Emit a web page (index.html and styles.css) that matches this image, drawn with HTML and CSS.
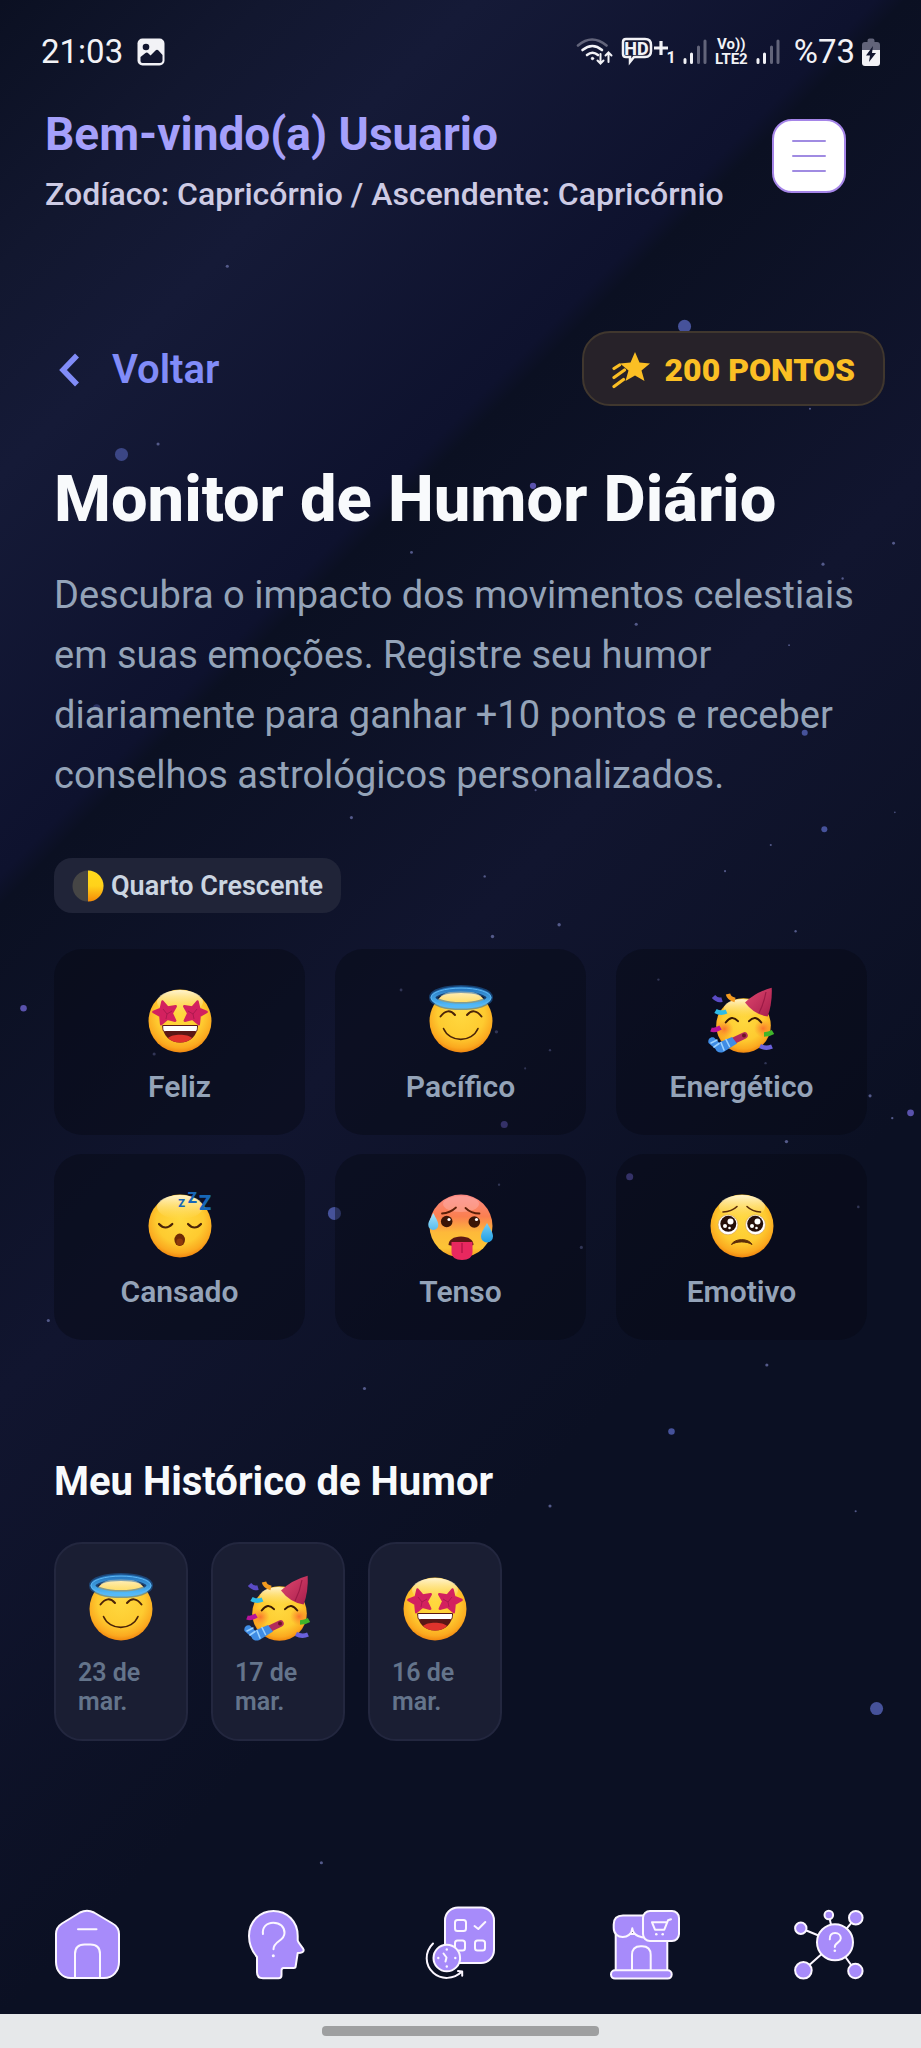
FILE: index.html
```html
<!DOCTYPE html>
<html lang="pt-BR">
<head>
<meta charset="utf-8">
<meta name="viewport" content="width=device-width, initial-scale=1">
<title>Monitor de Humor Diário</title>
<link rel="stylesheet" href="styles.css">
</head>
<body>
<svg class="defs" width="0" height="0" aria-hidden="true">
  <defs>
    <radialGradient id="skin" cx="50%" cy="40%" r="62%">
      <stop offset="0" stop-color="#ffd83f"/><stop offset=".6" stop-color="#fecb30"/><stop offset=".85" stop-color="#fba91f"/><stop offset="1" stop-color="#ee7d0c"/>
    </radialGradient>
    <linearGradient id="shine" x1="0" y1="0" x2="0" y2="1">
      <stop offset="0" stop-color="#fff6d8" stop-opacity=".95"/><stop offset="1" stop-color="#ffe680" stop-opacity="0"/>
    </linearGradient>
    <linearGradient id="heat" x1="0" y1="0" x2="0" y2="1">
      <stop offset="0" stop-color="#fb8a84"/><stop offset=".35" stop-color="#fb7f50"/><stop offset=".6" stop-color="#fdb93a"/><stop offset=".85" stop-color="#fdc535"/><stop offset="1" stop-color="#f39a1c"/>
    </linearGradient>
    <linearGradient id="drop" x1="0" y1="0" x2="0" y2="1">
      <stop offset="0" stop-color="#a6e4fb"/><stop offset="1" stop-color="#1f9fe4"/>
    </linearGradient>
    <linearGradient id="hat" x1="0" y1="0" x2="1" y2="1">
      <stop offset="0" stop-color="#e0486f"/><stop offset="1" stop-color="#a81d4c"/>
    </linearGradient>
    <radialGradient id="blush"><stop offset="0" stop-color="#f9622b" stop-opacity=".8"/><stop offset="1" stop-color="#f9822b" stop-opacity="0"/></radialGradient>
    <linearGradient id="halo" x1="0" y1="0" x2="0" y2="1">
      <stop offset="0" stop-color="#2878c0"/><stop offset="1" stop-color="#53bdfb"/>
    </linearGradient>
    <linearGradient id="moonlit" x1="0" y1="0" x2="0" y2="1"><stop offset="0" stop-color="#ffd91c"/><stop offset=".5" stop-color="#ffd21a"/><stop offset="1" stop-color="#f58a07"/></linearGradient>

    <symbol id="e-base" viewBox="0 0 72 72">
      <circle cx="36" cy="38" r="31.5" fill="url(#skin)"/>
      <ellipse cx="36" cy="19" rx="23" ry="12" fill="url(#shine)"/>
    </symbol>
    <symbol id="e-stars" viewBox="0 0 72 72">
      <use href="#e-base"/>
      <g fill="#d3215f" stroke="#d3215f" stroke-width="2.5" stroke-linejoin="round">
        <path d="M18.500 18.500l5.200 6 8-1.200-4 7 3.500 7.400-7.800-1.800-6.200 5.200-.8-8.200-7-4 7.400-3z"/>
        <path d="M53.500 18.500l-5.200 6-8-1.200 4 7-3.500 7.400 7.800-1.800 6.200 5.200.8-8.200 7-4-7.400-3z"/>
      </g>
      <path d="M19 26l4 5 5-3M23 31l-1 5M53 26l-4 5-5-3M49 31l1 5" fill="none" stroke="#ad194f" stroke-width="1"/>
      <path d="M18.700 42.500h34.800c0 10-7 17-17.400 17s-17.400-7-17.400-17z" fill="#5b1715"/>
      <path d="M24 55c4-4.500 20-4.500 24 0-6 6-18 6-24 0z" fill="#e0332c"/>
      <path d="M18.700 42.500h34.800c0 5-.5 6-2.500 6H21.200c-2 0-2.500-1-2.500-6z" fill="#fff" stroke="#5b1715" stroke-width="1"/>
    </symbol>
    <symbol id="e-angel" viewBox="0 0 72 72">
      <use href="#e-base"/>
      <ellipse cx="36" cy="14.600" rx="28" ry="8.500" fill="none" stroke="#1f66ad" stroke-opacity=".55" stroke-width="8"/>
      <ellipse cx="36" cy="14.600" rx="28" ry="8.500" fill="none" stroke="url(#halo)" stroke-width="5"/>
      <ellipse cx="36" cy="14.600" rx="30" ry="9.500" fill="none" stroke="#5db6f3" stroke-width="1"/>
      <g fill="none" stroke="#4a2308" stroke-width="1.600" stroke-linecap="round">
        <path d="M15.500 33.500q7.500-9.500 14.500-1.500M42 32q7-8 14.500 1.500" stroke-width="2"/>
        <path d="M18.500 45.500c6 14.500 28.500 14.500 34.500 0"/>
      </g>
    </symbol>
    <symbol id="e-party" viewBox="0 0 72 72">
      <circle cx="37.500" cy="42.500" r="27.300" fill="url(#skin)"/>
      <ellipse cx="36" cy="25" rx="18" ry="9" fill="url(#shine)"/>
      <circle cx="18.500" cy="46" r="9" fill="url(#blush)"/><circle cx="57" cy="45.500" r="9" fill="url(#blush)"/>
      <path d="M65.700 4.800Q66.500 20 61.700 33.500 48 31.500 39 19.500 50 9 65.700 4.800z" fill="url(#hat)"/>
      <path d="M60 9Q58 20 53 30" fill="none" stroke="#9c1a46" stroke-width="1.200"/>
      <path d="M19.700 39.500q6-8.500 12.300-1.300M43 38.200q6.300-7.200 12.300 1.300" fill="none" stroke="#3a1a05" stroke-width="2" stroke-linecap="round"/>
      <path d="M38.500 52.500L27 58" stroke="#b32c5c" stroke-width="6.500" stroke-linecap="round"/>
      <path d="M26 54l5 6.500-13.500 8.500c-4 1.500-7 0-8-3L2.500 60c-1-4 2-6.500 5.500-5.500l5 5z" fill="#3f8ce4"/>
      <path d="M5 60l6-3M8 64l5-3.500M20 56.500l3.500 7M15 59.500l3 7.500" stroke="#9bd2ff" stroke-width="1.600" stroke-linecap="round"/>
      <circle cx="38" cy="52.500" r="2" fill="#6b1424"/>
      <g stroke-width="4.500" fill="none">
        <path d="M7.500 13.500q4 4.500 8.500 3" stroke="#5a4bc4"/><path d="M22 11q1 4.500 7 6" stroke="#f39a1f"/>
        <path d="M9.500 28q5 3 11 .5" stroke="#2fbbe6"/><path d="M5 46.500q4 1.500 9.500-2" stroke="#b8129a"/>
        <path d="M58 51.500q5 0 9-2.500" stroke="#3fb52a"/><path d="M54 63q6 3 12 .5" stroke="#6a61dc"/>
      </g>
    </symbol>
    <symbol id="e-sleep" viewBox="0 0 72 72">
      <use href="#e-base"/>
      <path d="M15 36q6.500 7 13.300 0M44 36q6.500 7 13 0" fill="none" stroke="#4a2308" stroke-width="2.200" stroke-linecap="round"/>
      <ellipse cx="35.700" cy="51.800" rx="5.300" ry="6.200" fill="#6e2a06"/>
      <ellipse cx="35.700" cy="54" rx="3.300" ry="3.500" fill="#8f3a0a"/>
      <g class="zzz" text-anchor="middle"><text x="37.700" y="18.500" font-size="11">Z</text><text x="48.300" y="15" font-size="15">Z</text><text x="61" y="21.500" font-size="20">Z</text></g>
    </symbol>
    <symbol id="e-hot" viewBox="0 0 72 72">
      <circle cx="36" cy="38" r="31.500" fill="url(#heat)"/>
      <ellipse cx="36" cy="16" rx="18" ry="8" fill="#ffc3c3" opacity=".35"/>
      <circle cx="21.700" cy="33.500" r="5.800" fill="#3b1506"/><circle cx="49.300" cy="34" r="5.800" fill="#3b1506"/>
      <circle cx="24" cy="31.500" r="1.600" fill="#fff"/><circle cx="51.500" cy="31.500" r="1.600" fill="#fff"/>
      <path d="M17 25.500q8-.5 14-6M40.500 20q5.500 5.500 14 5.500" fill="none" stroke="#5c1f08" stroke-width="1.800" stroke-linecap="round"/>
      <path d="M23.500 57c0-5 5-8.500 12.500-8.500S48.500 52 48.500 57q-6 2-12.500 2t-12.500-2z" fill="#5b1715"/>
      <path d="M26.500 54h21v10c0 5-4 8-10.500 8s-10.500-3-10.500-8z" fill="#e8285f"/>
      <path d="M37 55v10" stroke="#b81649" stroke-width="1.500"/>
      <path d="M8.300 25c3 6 5 8.500 5 12a5 5 0 0 1-10 0c0-3.500 2-6 5-12zM62 35c4 7 6 10 6 13.500a6 6 0 0 1-12 0c0-3.500 2-6.500 6-13.500z" fill="url(#drop)"/>
    </symbol>
    <symbol id="e-plead" viewBox="0 0 72 72">
      <use href="#e-base"/>
      <circle cx="22" cy="36.800" r="10" fill="#fff" stroke="#d9a85c" stroke-width=".7"/><circle cx="49.500" cy="36.800" r="10" fill="#fff" stroke="#d9a85c" stroke-width=".7"/>
      <circle cx="22.300" cy="35.800" r="8" fill="#26100a"/><circle cx="49.200" cy="35.800" r="8" fill="#26100a"/>
      <g fill="#fff"><circle cx="24.500" cy="33.500" r="3"/><circle cx="51.500" cy="33.500" r="3"/><circle cx="19" cy="38" r="2"/><circle cx="46" cy="38" r="2"/><circle cx="23.500" cy="40" r="1.300"/><circle cx="50.500" cy="40" r="1.300"/></g>
      <path d="M17 24q9-.5 14-5.500M41 18.500q5 5 13.500 5.500" fill="none" stroke="#5c2c08" stroke-width="1.600" stroke-linecap="round"/>
      <path d="M25.500 56.500c3-6.500 17.500-6.500 20.500 0-5-3.500-15.500-3.500-20.500 0z" fill="#5c2c08" stroke="#5c2c08" stroke-linejoin="round"/>
    </symbol>
    <symbol id="s-bars" viewBox="0 0 26 28">
      <g stroke-width="3" stroke-linecap="round"><path d="M3 21.500v3M9.500 16v8.500" stroke="#f2f2f6"/><path d="M16.500 9v15.500M23 3v21.500" stroke="#62647a"/></g>
    </symbol>
  </defs>
</svg>

<svg class="stars" viewBox="0 0 705 1568" preserveAspectRatio="xMidYMid slice" aria-hidden="true">
  <g fill="#46529a">
    <circle cx="524" cy="250" r="5"/><circle cx="93" cy="348" r="5" opacity=".8"/><circle cx="671" cy="1308" r="5"/><circle cx="256" cy="929" r="5"/>
    <circle cx="514" cy="1096" r="2.500"/><circle cx="631" cy="635" r="2.300"/><circle cx="616" cy="561" r="2.300"/><circle cx="74" cy="542" r="2.800" opacity=".5"/>
  </g>
  <g fill="#5a52ac">
    <circle cx="408" cy="372" r="2.400"/><circle cx="18" cy="772" r="2.500"/><circle cx="697" cy="852" r="2.600"/><circle cx="386" cy="861" r="2.700"/><circle cx="482" cy="901" r="2.700"/><circle cx="227" cy="1187" r="2.600"/>
  </g>
  <g fill="#545a8a">
    <circle cx="174" cy="204" r="1.200"/><circle cx="121" cy="340" r="1.200"/><circle cx="620" cy="313" r=".8"/><circle cx="315" cy="423" r="1.100"/><circle cx="684" cy="416" r="1.100"/>
    <circle cx="630" cy="432" r="1.200"/><circle cx="645" cy="443" r=".9"/><circle cx="487" cy="478" r="1.200"/><circle cx="604" cy="494" r=".7"/><circle cx="451" cy="503" r=".8"/>
    <circle cx="410" cy="605" r=".8"/><circle cx="269" cy="626" r="1.200"/><circle cx="685" cy="622" r=".6"/><circle cx="590" cy="647" r=".8"/><circle cx="555" cy="667" r=".8"/>
    <circle cx="371" cy="671" r=".9"/><circle cx="428" cy="708" r="1.300"/><circle cx="377" cy="717" r="1.300"/><circle cx="609" cy="713" r=".9"/><circle cx="307" cy="758" r="1.100"/>
    <circle cx="504" cy="750" r=".9"/><circle cx="118" cy="807" r="1.200"/><circle cx="380" cy="790" r="1.300"/><circle cx="421" cy="804" r=".9"/><circle cx="402" cy="818" r=".8"/>
    <circle cx="586" cy="814" r=".9"/><circle cx="666" cy="839" r="1.200"/><circle cx="683" cy="856" r=".9"/><circle cx="602" cy="874" r="1.300"/><circle cx="382" cy="907" r=".9"/>
    <circle cx="657" cy="924" r="1"/><circle cx="445" cy="955" r="1.200"/><circle cx="37" cy="1011" r="1.200"/><circle cx="587" cy="1045" r="1.200"/><circle cx="279" cy="1063" r="1.200"/>
    <circle cx="421" cy="1153" r="1.200"/><circle cx="655" cy="1157" r=".8"/><circle cx="246" cy="1426" r="1.200"/>
  </g>
</svg>

<div class="app">
  <div class="status">
    <span class="status-text">21:03</span>
    <svg class="photo" width="28" height="28" viewBox="0 0 28 28"><rect x=".5" y=".5" width="27" height="27" rx="5" fill="#f2f2f6"/><circle cx="9" cy="9" r="3.300" fill="#11152e"/><path d="M3.500 23v-4l5-4q1.500-1 3 .5l2 2 5-5q1.500-1.500 3 0l4 4.500v6q-.5 2-2.500 2H5.500q-2 0-2-2z" fill="#11152e"/></svg>
    <div class="status-right">
      <svg width="38" height="30" viewBox="0 0 38 30" fill="none" stroke="#f2f2f6" stroke-width="2.600" stroke-linecap="round"><path d="M2 8.500q14-12 28.500 0" stroke="#62647a"/><path d="M6.500 13q10-8 19.500 0M11 18q5.500-4.500 11 0"/><circle cx="16.500" cy="21.500" r="1.200" fill="#f2f2f6" stroke-width="1"/><g stroke-width="2"><path d="M24.500 17v9M21.500 23.500l3 3 3-3M32.500 25v-9M29.500 18.500l3-3 3 3"/></g></svg>
      <svg width="54" height="30" viewBox="0 0 54 30"><path d="M5 2h19q6 0 6 6v6q0 6-6 6H13l-4 5v-5H5q-3 0-3-3V5q0-3 3-3z" fill="none" stroke="#f2f2f6" stroke-width="2.500"/><text x="15.500" y="17.500" class="hd" text-anchor="middle">HD</text><path d="M40 4v14M33 11h14" stroke="#f2f2f6" stroke-width="3.200"/><text x="50" y="26" class="hd-sub" text-anchor="middle">1</text></svg>
      <svg width="26" height="28"><use href="#s-bars"/></svg>
      <span class="volte">Vo))<br>LTE2</span>
      <svg width="26" height="28"><use href="#s-bars"/></svg>
      <span class="status-text">%73</span>
      <svg class="battery" width="18" height="28" viewBox="0 0 18 28"><path d="M5.500 2.500q0-2 2-2h3q2 0 2 2V4H15q3 0 3 3v5H0V7q0-3 3-3h2.500z" fill="#62647a"/><path d="M0 12h18v13q0 3-3 3H3q-3 0-3-3z" fill="#f2f2f6"/><path d="M11 8L4 17.500h4L7 24l7-9h-4z" fill="#11152e"/></svg>
    </div>
  </div>

  <header class="header">
    <div class="greeting">
      <p class="hello">Bem-vindo(a) Usuario</p>
      <p class="sign">Zodíaco: Capricórnio / Ascendente: Capricórnio</p>
    </div>
    <button class="menu" type="button" aria-label="Menu"><svg width="36" height="36" viewBox="0 0 36 36" stroke="#a08be2" stroke-width="2" stroke-linecap="round"><path d="M2 3h32M2 18h32M2 33h32"/></svg></button>
  </header>

  <main class="main">
    <div class="topbar">
      <a class="back" href="#"><svg width="22" height="34" viewBox="0 0 22 34" fill="none" stroke="#818cf8" stroke-width="5.500"><path d="M19 2.500L5 17l14 14.500"/></svg>Voltar</a>
      <div class="points"><svg width="38" height="38" viewBox="0 0 38 38"><path d="M23 1l4.500 10.500L38 12.500l-8.500 7L32.500 30 23 24.500 13.500 30l3-10.500L8 12.500l10.500-1z" fill="#fbbf24"/><g stroke="#fbbf24" stroke-width="3.200" stroke-linecap="round"><path d="M2 17.500l5.500-3.500M2 26.500l10.500-7.500M2 35.500l9.500-7"/></g></svg>200 PONTOS</div>
    </div>

    <h1 class="title">Monitor de Humor Diário</h1>
    <p class="intro">Descubra o impacto dos movimentos celestiais em suas emoções. Registre seu humor diariamente para ganhar +10 pontos e receber conselhos astrológicos personalizados.</p>

    <div class="phase"><svg width="32" height="32" viewBox="0 0 32 32"><circle cx="16" cy="16" r="15.500" fill="#454545"/><path d="M16 .5a15.500 15.500 0 0 1 0 31z" fill="url(#moonlit)"/></svg>Quarto Crescente</div>

    <div class="moods">
      <button class="mood" type="button"><svg class="emoji"><use href="#e-stars"/></svg>Feliz</button>
      <button class="mood" type="button"><svg class="emoji"><use href="#e-angel"/></svg>Pacífico</button>
      <button class="mood" type="button"><svg class="emoji"><use href="#e-party"/></svg>Energético</button>
      <button class="mood" type="button"><svg class="emoji"><use href="#e-sleep"/></svg>Cansado</button>
      <button class="mood" type="button"><svg class="emoji"><use href="#e-hot"/></svg>Tenso</button>
      <button class="mood" type="button"><svg class="emoji"><use href="#e-plead"/></svg>Emotivo</button>
    </div>

    <h2 class="subtitle">Meu Histórico de Humor</h2>
    <ul class="history">
      <li class="entry"><svg class="emoji"><use href="#e-angel"/></svg><span>23 de mar.</span></li>
      <li class="entry"><svg class="emoji"><use href="#e-party"/></svg><span>17 de mar.</span></li>
      <li class="entry"><svg class="emoji"><use href="#e-stars"/></svg><span>16 de mar.</span></li>
    </ul>
  </main>

  <nav class="tabs">
    <a href="#" aria-label="Início"><svg class="tab" viewBox="0 0 80 80"><path class="f" d="M4 34c0-5.500 2-8 6-10.500L28 12.500q7-3.500 14 0l18.500 11C65 26 67 28.500 67 34v28c0 9-6 16-15 16H19C10 78 4 71 4 62z"/><path d="M23 78V54q0-9.500 9.500-9.500h6Q48 44.500 48 54v24M26 29.300h18.500"/></svg></a>
    <a href="#" aria-label="Perguntas"><svg class="tab" viewBox="0 0 80 80"><path class="f" d="M37.500 11C51 11 61.700 21.500 61.700 36v4.500c1 3.500 5 6.500 6 9.500 0 2-3 3-6 3l-2 13q0 2-2 2H47.500q-2 0-2 2.500V75q0 3.300-3 3.300H27q-6 0-6-6V57C15 50 13 44 13 36 13 21.500 24 11 37.500 11z"/><path d="M27 34C26 27.500 30.500 22.700 37.300 22.700S48.500 27 48.500 33c0 8.500-11 7.500-11 16.300"/><circle class="d" cx="37.300" cy="55.700" r="1.500"/></svg></a>
    <a href="#" aria-label="Agenda"><svg class="tab" viewBox="0 0 80 80"><rect class="f" x="25" y="7.500" width="49" height="55.500" rx="13"/><rect x="35" y="20" width="11" height="11" rx="2.500"/><rect x="35" y="40.500" width="10" height="10" rx="2.500"/><rect x="55" y="40.500" width="10" height="10" rx="2.500"/><path d="M54.500 26l3.800 3 7-7"/><circle class="f" cx="26.800" cy="58" r="13.300"/><path d="M23.500 53.500l3 4-1 4"/><g class="d"><circle cx="26.800" cy="49.500" r="1.200"/><circle cx="26.800" cy="66.500" r="1.200"/><circle cx="18.300" cy="58" r="1.200"/><circle cx="35.300" cy="58" r="1.200"/></g><path d="M13 43.500C4.500 52 4.500 65 13.500 73c8 7 20 6.500 28.500-1.500M38 71l4.200.5v4.300"/></svg></a>
    <a href="#" aria-label="Loja"><svg class="tab" viewBox="0 0 80 80"><path class="f" d="M10.700 34h51.600v37H10.700z"/><path class="f" d="M18 15.500h27v22c-9 1-17-2-17.700-9.200C26.500 40 8.700 40 8.700 28v-3.500q0-9 9.300-9z"/><path d="M27 70.300V55q0-8.700 8.700-8.700h1.300q8.700 0 8.700 8.700v15.300"/><rect class="f" x="6" y="70.300" width="60.700" height="8.300" rx="4"/><rect class="f" x="38" y="11" width="36" height="30" rx="7"/><path d="M66 19.300l-3 1-3.700 9.400H50l-3-7.400h15"/><g class="d"><circle cx="51.300" cy="34.300" r="1.300"/><circle cx="57.700" cy="34.300" r="1.300"/></g></svg></a>
    <a href="#" aria-label="Comunidade"><svg class="tab" viewBox="0 0 80 80"><path d="M46 42.300l-34.200-14M46 42.300L39.800 15M46 42.300l20.800-24.600M46 42.300L14.400 70.300M46 42.300L66.400 71"/><circle class="f" cx="46" cy="42.300" r="18"/><circle class="f" cx="11.800" cy="28.300" r="5.700"/><circle class="f" cx="39.800" cy="15" r="4.300"/><circle class="f" cx="66.800" cy="17.700" r="6.800"/><circle class="f" cx="14.400" cy="70.300" r="8.300"/><circle class="f" cx="66.400" cy="71" r="7.200"/><path d="M40.800 39.300C40.500 35.500 42.500 33 46.100 33s5.700 2.500 5.700 5.300c0 4.700-6 4-6 8.700"/><circle class="d" cx="45.800" cy="50.700" r="1.300"/></svg></a>
  </nav>
  <div class="gesture"><span></span></div>
</div>
</body>
</html>
```
FILE: styles.css
```css
* { box-sizing: border-box; }

body {
  margin: 0;
  position: relative;
  min-height: 100vh;
  font-family: Roboto, "Noto Sans", sans-serif;
  color: #f8fafc;
  background: linear-gradient(135deg, #0b1022 0%, #12172f 9%, #151a37 16%, #0e122e 29.5%, #0b1022 30.5%, #11152f 47%, #0b1023 68%, #0b1023 100%);
}

p, h1, h2, ul { margin: 0; padding: 0; }

.defs { position: absolute; }

.stars {
  position: absolute;
  inset: 0;
  width: 100%;
  height: 100%;
}

.app {
  position: relative;
  display: flex;
  flex-direction: column;
  min-height: 100vh;
}

.status {
  display: flex;
  align-items: center;
  height: 104px;
  padding: 0 41px;
  color: #f2f2f6;
}

.status-text { font-size: 33px; line-height: 40px; }
.photo { margin-left: 14px; }

.status-right {
  display: flex;
  align-items: center;
  gap: 7px;
  margin-left: auto;
}

.volte {
  font-size: 15px;
  font-weight: 700;
  line-height: 15px;
  text-align: center;
}

.status-right .status-text { margin-left: 6px; }

.hd { font-size: 18px; font-weight: 800; fill: #f2f2f6; }
.hd-sub { font-size: 16px; font-weight: 700; fill: #f2f2f6; }
.zzz { font-weight: 900; fill: #1767b8; }

.header {
  display: flex;
  justify-content: space-between;
  align-items: flex-start;
  padding: 2px 75px 0 45px;
}

.hello {
  font-size: 46px;
  font-weight: 700;
  line-height: 56px;
  color: #a5a0fb;
}

.sign {
  margin-top: 12px;
  font-size: 32px;
  font-weight: 500;
  line-height: 40px;
  color: #cdcbe4;
}

.menu {
  display: grid;
  place-items: center;
  width: 74px;
  height: 74px;
  margin-top: 13px;
  padding: 0;
  border: 2px solid #a585e8;
  border-radius: 20px;
  background: #fff;
}

.main {
  flex: 1;
  padding: 117px 54px 0;
}

.topbar {
  display: flex;
  justify-content: space-between;
  align-items: center;
  margin-right: -18px;
}

.back {
  display: flex;
  align-items: center;
  gap: 32px;
  padding: 3px 0 0 4px;
  font-size: 40px;
  font-weight: 600;
  line-height: 48px;
  color: #818cf8;
  text-decoration: none;
}

.points {
  display: flex;
  align-items: center;
  gap: 15px;
  height: 75px;
  padding: 2px 28px 0;
  border: 2px solid #40372e;
  border-radius: 28px;
  background: #272229;
  font-size: 32px;
  font-weight: 900;
  color: #fbbf24;
}

.title {
  margin-top: 55px;
  font-size: 65px;
  font-weight: 800;
  line-height: 76px;
}

.intro {
  margin-top: 28px;
  font-size: 38px;
  line-height: 60px;
  color: #94a3b8;
}

.phase {
  display: flex;
  align-items: center;
  gap: 7px;
  width: fit-content;
  height: 55px;
  margin-top: 53px;
  padding: 0 18px;
  border-radius: 18px;
  background: #202438;
  font-size: 27px;
  font-weight: 600;
  color: #cbd5e1;
}

.moods {
  display: grid;
  grid-template-columns: repeat(3, 1fr);
  gap: 19px 30px;
  margin-top: 36px;
}

.mood {
  display: flex;
  flex-direction: column;
  align-items: center;
  gap: 14px;
  padding: 34px 10px 30px;
  border: 0;
  border-radius: 28px;
  background: rgba(7, 9, 20, 0.45);
  font: 600 30px/36px Roboto, "Noto Sans", sans-serif;
  color: #94a3b8;
}

.emoji { display: block; width: 72px; height: 72px; }

.subtitle {
  margin-top: 118px;
  font-size: 40px;
  font-weight: 700;
  line-height: 48px;
}

.history {
  display: flex;
  gap: 23px;
  margin-top: 36px;
  list-style: none;
}

.entry {
  display: flex;
  flex-direction: column;
  align-items: center;
  gap: 15px;
  width: 134px;
  padding: 27px 22px 23px;
  border: 2px solid #23273f;
  border-radius: 28px;
  background: #1a1e33;
  font-size: 25px;
  font-weight: 600;
  line-height: 29px;
  color: #64748b;
}

.tabs {
  display: grid;
  grid-template-columns: repeat(5, 1fr);
  justify-items: center;
  padding-bottom: 34px;
}

.tab {
  display: block;
  width: 80px;
  height: 80px;
  fill: none;
  stroke: #fbf6ff;
  stroke-width: 2;
  stroke-linecap: round;
  stroke-linejoin: round;
}

.tab .f { fill: #a78bfa; }
.tab .d { fill: #fbf6ff; stroke: none; }

.gesture {
  display: grid;
  place-items: center;
  height: 34px;
  background: #e6e8ea;
}

.gesture span {
  width: 30%;
  height: 10px;
  border-radius: 4px;
  background: #9e9fa0;
}
```
